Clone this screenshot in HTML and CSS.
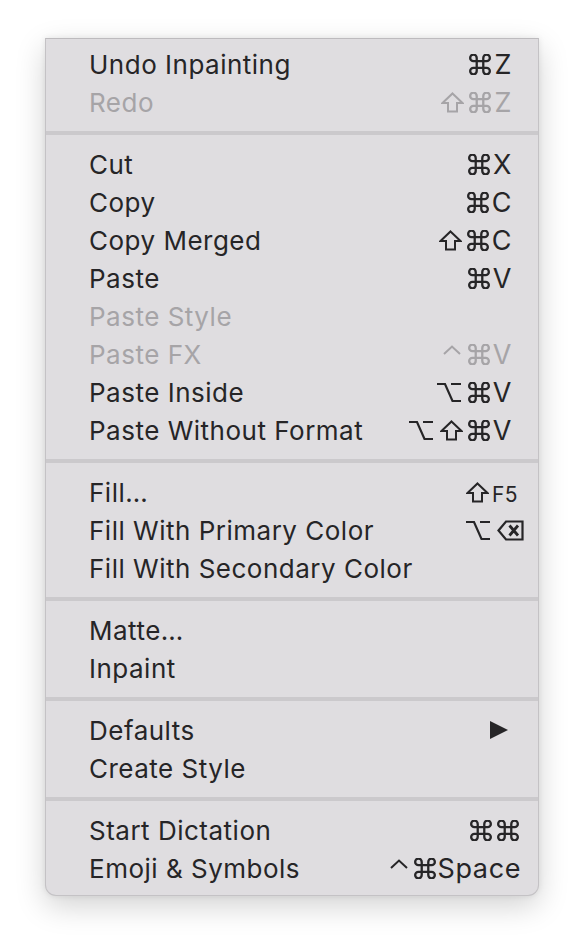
FILE: index.html
```html
<!DOCTYPE html>
<html>
<head>
<meta charset="utf-8">
<link rel="stylesheet" href="styles.css">
</head>
<body>
<svg width="0" height="0" class="defs">
  <defs>
    <symbol id="cmd" viewBox="2.4 2.4 19.2 19.2"><path d="M15 6v12a3 3 0 1 0 3-3H6a3 3 0 1 0 3 3V6a3 3 0 1 0-3 3h12a3 3 0 1 0-3-3z" fill="none" stroke="currentColor" stroke-width="2.1"/></symbol>
    <symbol id="shift" viewBox="0 0 23 21"><path d="M11.5 1.5 L21.5 11 H16 V19.5 H7 V11 H1.5 Z" fill="none" stroke="currentColor" stroke-width="2" stroke-linejoin="miter"/></symbol>
    <symbol id="opt" viewBox="0 0 24 21"><path d="M0 2 H8 L15.5 19 H24 M14 2 H24" fill="none" stroke="currentColor" stroke-width="2.2"/></symbol>
    <symbol id="ctrl" viewBox="0 0 18 10"><path d="M1 9 L9 1.5 L17 9" fill="none" stroke="currentColor" stroke-width="2"/></symbol>
    <symbol id="del" viewBox="0 0 27 21"><path d="M1.5 10.5 L9 1.5 H25.5 V19.5 H9 Z" fill="none" stroke="currentColor" stroke-width="2.2" stroke-linejoin="miter"/><path d="M12.5 5.5 L21 15.5 M21 5.5 L12.5 15.5" fill="none" stroke="currentColor" stroke-width="2.8"/></symbol>
    <symbol id="tri" viewBox="0 0 18 18"><path d="M0 0 L18 9 L0 18 Z" fill="currentColor"/></symbol>
  </defs>
</svg>
<div class="menu">
  <div class="section">
    <div class="item"><span class="label">Undo Inpainting</span><span class="key"><svg class="g cmd"><use href="#cmd"/></svg><span class="ch">Z</span></span></div>
    <div class="item disabled"><span class="label">Redo</span><span class="key"><svg class="g shift"><use href="#shift"/></svg><svg class="g cmd"><use href="#cmd"/></svg><span class="ch">Z</span></span></div>
  </div>
  <div class="sep"></div>
  <div class="section">
    <div class="item"><span class="label">Cut</span><span class="key"><svg class="g cmd"><use href="#cmd"/></svg><span class="ch">X</span></span></div>
    <div class="item"><span class="label">Copy</span><span class="key"><svg class="g cmd"><use href="#cmd"/></svg><span class="ch">C</span></span></div>
    <div class="item"><span class="label">Copy Merged</span><span class="key"><svg class="g shift"><use href="#shift"/></svg><svg class="g cmd"><use href="#cmd"/></svg><span class="ch">C</span></span></div>
    <div class="item"><span class="label">Paste</span><span class="key"><svg class="g cmd"><use href="#cmd"/></svg><span class="ch">V</span></span></div>
    <div class="item disabled"><span class="label">Paste Style</span></div>
    <div class="item disabled"><span class="label">Paste FX</span><span class="key"><svg class="g ctrl"><use href="#ctrl"/></svg><svg class="g cmd"><use href="#cmd"/></svg><span class="ch">V</span></span></div>
    <div class="item"><span class="label">Paste Inside</span><span class="key"><svg class="g opt"><use href="#opt"/></svg><svg class="g cmd"><use href="#cmd"/></svg><span class="ch">V</span></span></div>
    <div class="item"><span class="label">Paste Without Format</span><span class="key"><svg class="g opt"><use href="#opt"/></svg><svg class="g shift"><use href="#shift"/></svg><svg class="g cmd"><use href="#cmd"/></svg><span class="ch">V</span></span></div>
  </div>
  <div class="sep"></div>
  <div class="section">
    <div class="item"><span class="label">Fill…</span><span class="key shift-f5"><svg class="g shift"><use href="#shift"/></svg><span class="ch small">F5</span></span></div>
    <div class="item"><span class="label">Fill With Primary Color</span><span class="key opt-del"><svg class="g opt"><use href="#opt"/></svg><svg class="g del"><use href="#del"/></svg></span></div>
    <div class="item"><span class="label">Fill With Secondary Color</span></div>
  </div>
  <div class="sep"></div>
  <div class="section">
    <div class="item"><span class="label">Matte…</span></div>
    <div class="item"><span class="label">Inpaint</span></div>
  </div>
  <div class="sep"></div>
  <div class="section">
    <div class="item"><span class="label">Defaults</span><span class="key submenu"><svg class="g tri"><use href="#tri"/></svg></span></div>
    <div class="item"><span class="label">Create Style</span></div>
  </div>
  <div class="sep"></div>
  <div class="section">
    <div class="item"><span class="label">Start Dictation</span><span class="key dict"><svg class="g cmd"><use href="#cmd"/></svg><svg class="g cmd"><use href="#cmd"/></svg></span></div>
    <div class="item"><span class="label">Emoji &amp; Symbols</span><span class="key emoji"><svg class="g ctrl top"><use href="#ctrl"/></svg><svg class="g cmd"><use href="#cmd"/></svg><span class="ch">Space</span></span></div>
  </div>
</div>
</body>
</html>
```
FILE: styles.css
```css
html, body {
  margin: 0;
  padding: 0;
  background: #ffffff;
}
body {
  width: 584px;
  height: 950px;
  overflow: hidden;
  padding-top: 38px;
  box-sizing: border-box;
  font-family: "Inter", "Noto Sans", sans-serif;
}
.defs {
  position: absolute;
  width: 0;
  height: 0;
}
.menu {
  margin-left: 45px;
  width: 494px;
  box-sizing: border-box;
  background: #dfdde0;
  border: 1px solid #c4c2c5;
  border-top-color: #bdbbbe;
  border-radius: 0 0 11px 11px;
  padding: 6px 0 8px;
  box-shadow: 0 10px 30px rgba(0,0,0,0.18), 0 0 6px rgba(0,0,0,0.08);
}
.section {
  display: flex;
  flex-direction: column;
}
.item {
  height: 38px;
  display: flex;
  align-items: center;
  justify-content: space-between;
  padding: 0 26px 0 43px;
  font-size: 26px;
  letter-spacing: 0.5px;
  color: #262527;
}
.item.disabled {
  color: #a6a4a7;
}
.key {
  display: flex;
  align-items: center;
  gap: 3px;
  height: 38px;
}
.ch {
  font-size: 27px;
  line-height: 1;
  letter-spacing: 0.6px;
}
.ch.small {
  font-size: 21px;
  letter-spacing: 0.4px;
  margin-top: 5px;
}
.g {
  display: block;
  flex: none;
}
.g.cmd {
  width: 22px;
  height: 21px;
}
.g.shift {
  width: 23px;
  height: 21px;
  margin-right: 2px;
}
.g.opt {
  width: 24px;
  height: 21px;
  margin-right: 4px;
}
.g.ctrl {
  width: 18px;
  height: 10px;
  margin-bottom: 9px;
  margin-right: 4px;
}
.g.del {
  width: 27px;
  height: 21px;
}
.g.tri {
  width: 18px;
  height: 18px;
}
.key.shift-f5 {
  margin-right: -6px;
  gap: 1px;
}
.key.opt-del {
  margin-right: -12px;
}
.key.submenu {
  margin-right: 4px;
}
.key.dict {
  margin-right: -7px;
  gap: 5px;
}
.key.emoji {
  margin-right: -9px;
  gap: 2px;
}
.sep {
  height: 4px;
  background: #cbc9cc;
  margin: 10px 0;
}
```
